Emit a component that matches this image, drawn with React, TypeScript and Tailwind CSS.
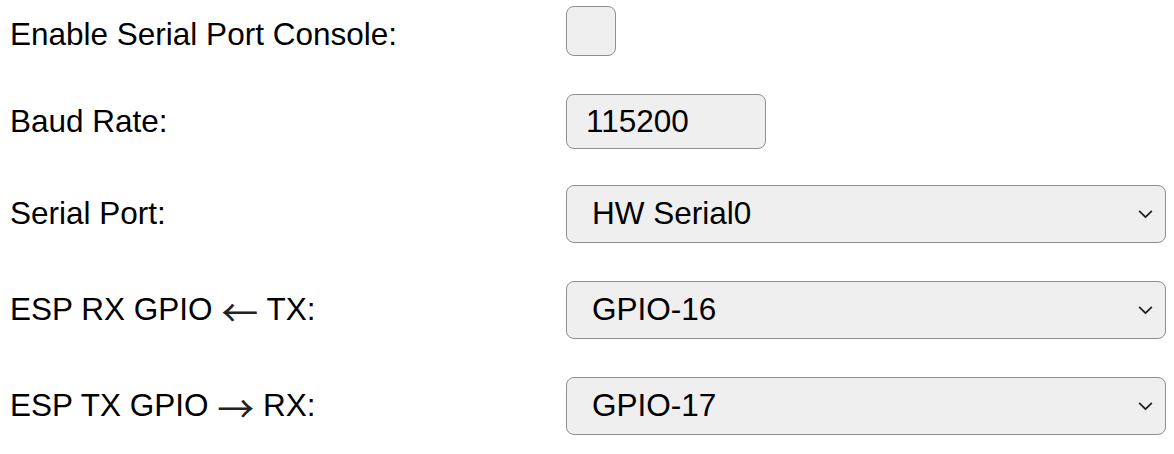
import React from 'react'

type SelectRowProps = {
  label: React.ReactNode
  value: string
}

const Arrow: React.FC<{ dir: 'left' | 'right' }> = ({ dir }) => (
  <span className="font-['Noto_Sans_CJK_JP',sans-serif] text-[37px] leading-none align-[-7px] text-[#222]">
    {dir === 'left' ? '←' : '→'}
  </span>
)

const Chevron = () => (
  <svg
    xmlns="http://www.w3.org/2000/svg"
    viewBox="0 0 16 10"
    fill="none"
    stroke="currentColor"
    strokeWidth={2}
    className="w-[15px] h-[9px] text-[#222]"
  >
    <path d="M1.5 1.5 8 8l6.5-6.5" strokeLinecap="round" strokeLinejoin="round" />
  </svg>
)

const SelectRow: React.FC<SelectRowProps> = ({ label, value }) => (
  <div className="flex items-center">
    <div className="w-[556px] shrink-0">{label}</div>
    <div className="flex items-center justify-between w-[600px] h-[58px] bg-[#efefef] border border-[#8f8f8f] rounded-[8px] pl-[25px] pr-[12px]">
      <span>{value}</span>
      <Chevron />
    </div>
  </div>
)

export default function App() {
  return (
    <div
      className="flex flex-col pl-[10px] pt-[6px] text-[31.5px] text-black bg-white"
      style={{ fontFamily: '"Liberation Sans", Arial, sans-serif' }}
    >
      <div className="flex items-start">
        <div className="w-[556px] shrink-0 pt-[10px] leading-[36px]">Enable Serial Port Console:</div>
        <div className="w-[50px] h-[50px] bg-[#efefef] border border-[#8f8f8f] rounded-[8px]" />
      </div>
      <div className="flex items-center mt-[38px]">
        <div className="w-[556px] shrink-0">Baud Rate:</div>
        <div className="flex items-center w-[200px] h-[55px] bg-[#efefef] border border-[#8f8f8f] rounded-[8px] pl-[19px]">
          115200
        </div>
      </div>
      <div className="flex flex-col gap-[38px] mt-[36px]">
        <SelectRow label="Serial Port:" value="HW Serial0" />
        <SelectRow
          label={
            <>
              ESP RX GPIO <Arrow dir="left" /> TX:
            </>
          }
          value="GPIO-16"
        />
        <SelectRow
          label={
            <>
              ESP TX GPIO <Arrow dir="right" /> RX:
            </>
          }
          value="GPIO-17"
        />
      </div>
    </div>
  )
}
